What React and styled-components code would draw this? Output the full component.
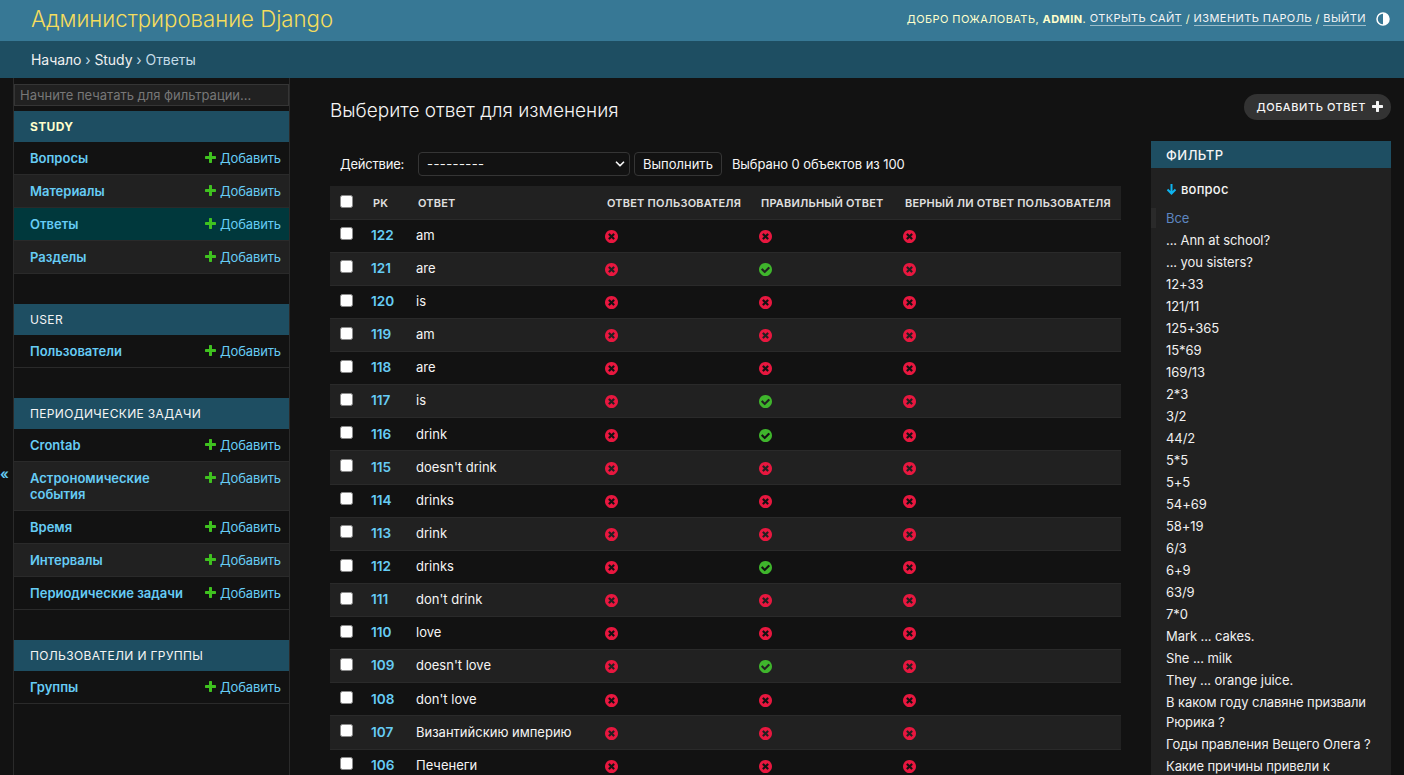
import React from "react";
import styled, { createGlobalStyle } from "styled-components";
import { ChevronDown } from "lucide-react";

const GlobalStyle = createGlobalStyle`
  html, body {
    margin: 0;
    padding: 0;
    height: 100%;
    overflow: hidden;
    background: #121212;
    color: #f5f5f5;
    font-family: Inter, "Noto Sans", sans-serif;
    font-size: 13px;
  }
  * {
    box-sizing: border-box;
  }
`;

const Page = styled.div`
  display: flex;
  flex-direction: column;
  height: 100vh;
  overflow: hidden;
`;

const Header = styled.header`
  display: flex;
  justify-content: space-between;
  align-items: center;
  height: 41px;
  flex: none;
  padding: 0 14px 4px 31px;
  background: #377895;
`;

const Brand = styled.h1`
  margin: 0;
  font-size: 22.2px;
  line-height: 30px;
  font-weight: 300;
  color: #f5dd5d;
`;

const UserTools = styled.div`
  display: flex;
  align-items: center;
  font-size: 11px;
  letter-spacing: 0.42px;
  text-transform: uppercase;
  color: #ffffcc;
  white-space: pre;
`;

const ToolLink = styled.a`
  color: #f5f5f5;
  border-bottom: 1px solid rgba(255, 255, 255, 0.5);
  line-height: 13px;
`;

const ThemeIcon = styled.svg`
  width: 14px;
  height: 14px;
  margin-left: 10px;
`;

const Breadcrumbs = styled.nav`
  display: flex;
  align-items: center;
  height: 37px;
  flex: none;
  padding-left: 31px;
  background: #1e4e62;
  font-size: 14px;
  letter-spacing: -0.06px;
  color: #c4dce8;
  white-space: pre;
`;

const Crumb = styled.a`
  color: #f0f0f0;
`;

const Main = styled.div`
  display: flex;
  flex: 1;
  min-height: 0;
`;

const ToggleColumn = styled.div`
  flex: none;
  width: 14px;
  padding-top: 386px;
  border-right: 1px solid #2a2a2a;
  color: #66ccf5;
  font-size: 14px;
  font-weight: 600;
  line-height: 20px;
`;

const Sidebar = styled.aside`
  flex: none;
  width: 276px;
  padding-top: 6px;
  border-right: 1px solid #2a2a2a;
`;

const FilterInput = styled.input`
  display: block;
  width: 100%;
  height: 22px;
  margin-bottom: 5px;
  padding: 0 5px;
  background: #212121;
  border: 1px solid #353535;
  color: #f5f5f5;
  font: 13px Inter, "Noto Sans", sans-serif;
  &::placeholder {
    color: #777;
    opacity: 1;
  }
`;

const AppSection = styled.section`
  margin-bottom: 30px;
`;

const AppTitle = styled.div`
  display: flex;
  align-items: center;
  height: 31px;
  padding-left: 16px;
  background: #1e4e62;
  font-size: 12px;
  letter-spacing: 0.35px;
  text-transform: uppercase;
  font-weight: ${(p) => (p.$current ? 700 : 400)};
  color: ${(p) => (p.$current ? "#ffffcc" : "#f5f5f5")};
`;

const rowBackground = (p) =>
  p.$current ? "#00383c" : p.$even ? "#212121" : "#121212";

const ModelRow = styled.div`
  display: flex;
  justify-content: space-between;
  align-items: flex-start;
  padding: 8px 8px 8px 16px;
  line-height: 16px;
  border-bottom: 1px solid #2a2a2a;
  background: ${rowBackground};
`;

const ModelName = styled.a`
  max-width: 160px;
  font-weight: 600;
  color: #66ccf5;
`;

const AddLink = styled.a`
  display: flex;
  align-items: center;
  gap: 4px;
  flex: none;
  letter-spacing: -0.12px;
  color: #66ccf5;
`;

const PlusIcon = styled.svg`
  width: 11px;
  height: 11px;
  margin-top: -2px;
  fill: ${(p) => p.$color || "#3fc21f"};
`;

const Content = styled.main`
  flex: 1;
  min-width: 0;
  padding: 16px 13px 0 40px;
`;

const TitleRow = styled.div`
  display: flex;
  justify-content: space-between;
  align-items: center;
  height: 26px;
`;

const Title = styled.h2`
  margin: 6px 0 0;
  font-size: 19px;
  font-weight: 300;
  color: #f5f5f5;
`;

const AddButton = styled.a`
  display: flex;
  align-items: center;
  gap: 6px;
  height: 26px;
  padding: 0 8px 0 12px;
  border-radius: 13px;
  background: #333;
  font-size: 11px;
  font-weight: 500;
  letter-spacing: 0.56px;
  text-transform: uppercase;
  color: #f5f5f5;
`;

const Changelist = styled.div`
  display: flex;
  gap: 30px;
  align-items: flex-start;
  margin-top: 21px;
`;

const Results = styled.div`
  flex: none;
  width: 791px;
  padding-top: 11px;
`;

const Actions = styled.div`
  display: flex;
  align-items: center;
  height: 24px;
  margin-bottom: 10px;
  padding-left: 10px;
`;

const ActionLabel = styled.label`
  width: 78px;
  flex: none;
  letter-spacing: -0.2px;
`;

const SelectWrap = styled.div`
  position: relative;
  width: 212px;
  height: 24px;
`;

const ActionSelect = styled.select`
  width: 100%;
  height: 100%;
  padding: 0 8px;
  appearance: none;
  background: #121212;
  border: 1px solid #353535;
  border-radius: 4px;
  color: #f5f5f5;
  letter-spacing: 0.4px;
  font: 13px Inter, "Noto Sans", sans-serif;
`;

const SelectChevron = styled(ChevronDown)`
  position: absolute;
  right: 3px;
  top: 5px;
  pointer-events: none;
  color: #f5f5f5;
`;

const RunButton = styled.button`
  height: 24px;
  margin-left: 4px;
  padding: 0 8px;
  background: #121212;
  border: 1px solid #353535;
  border-radius: 4px;
  color: #f5f5f5;
  font: 13px Inter, "Noto Sans", sans-serif;
`;

const Counter = styled.span`
  margin-left: 10px;
  letter-spacing: -0.08px;
`;

const Table = styled.table`
  width: 791px;
  border-collapse: collapse;
  table-layout: fixed;
`;

const HeadCell = styled.th`
  height: 33px;
  padding: 1px 10px 0;
  background: #212121;
  border-bottom: 1px solid #2a2a2a;
  font-size: 11px;
  font-weight: 600;
  letter-spacing: 0.2px;
  text-align: left;
  text-transform: uppercase;
  white-space: nowrap;
  color: #e0e0e0;
`;

const HeadCheckCell = styled(HeadCell)`
  padding: 0 0 2px 10px;
`;

const BodyRow = styled.tr`
  background: ${(p) => (p.$even ? "#212121" : "#121212")};
`;

const Cell = styled.td`
  height: 33.125px;
  padding: 0 8px 1.6px;
  border-bottom: 1px solid #2a2a2a;
`;

const CheckCell = styled(Cell)`
  padding: 0 0 3.6px 10px;
`;

const PkCell = styled(Cell)`
  font-weight: 600;
  color: #66ccf5;
  font-size: 13.6px;
`;

const Checkbox = styled.input`
  display: block;
  width: 13px;
  height: 13px;
  margin: 0;
  appearance: none;
  background: #fff;
  border: 1px solid #8a8a8a;
  border-radius: 2.5px;
`;

const BoolIcon = styled.svg`
  display: block;
  width: 13px;
  height: 13px;
  margin-top: 3px;
  fill: ${(p) => (p.$yes ? "#3fb52c" : "#e8173f")};
`;

const FilterPanel = styled.aside`
  flex: none;
  width: 240px;
  height: 800px;
  background: #212121;
`;

const FilterTitle = styled.div`
  display: flex;
  align-items: center;
  height: 27px;
  padding-left: 15px;
  background: #1e4e62;
  font-size: 13px;
  font-weight: 500;
  letter-spacing: 0.5px;
  text-transform: uppercase;
`;

const FilterHeading = styled.div`
  display: flex;
  align-items: center;
  gap: 4px;
  height: 20px;
  margin: 11px 0 9px 15px;
  font-size: 13px;
  font-weight: 500;
  letter-spacing: 0.2px;
`;

const ArrowIcon = styled.svg`
  width: 11px;
  height: 12px;
`;

const FilterList = styled.ul`
  margin: 0;
  padding: 0 15px;
  list-style: none;
  letter-spacing: -0.08px;
`;

const FilterItem = styled.li`
  margin-top: 2px;
  line-height: 20px;
  color: ${(p) => (p.$selected ? "#5d86c0" : "#f0f0f0")};
  ${(p) =>
    p.$selected &&
    `
    margin-left: -15px;
    padding-left: 10px;
    border-left: 5px solid #2a2a2a;
  `}
`;

const Plus = ({ color }) => (
  <PlusIcon $color={color} viewBox="192 192 1408 1408">
    <path d="M1600 796v192q0 40-28 68t-68 28h-416v416q0 40-28 68t-68 28h-192q-40 0-68-28t-28-68v-416h-416q-40 0-68-28t-28-68v-192q0-40 28-68t68-28h416v-416q0-40 28-68t68-28h192q40 0 68 28t28 68v416h416q40 0 68 28t28 68z" />
  </PlusIcon>
);

const Bool = ({ yes }) => (
  <BoolIcon $yes={yes} viewBox="128 128 1536 1536">
    {yes ? (
      <path d="M1412 734q0-28-18-46l-91-90q-19-19-45-19t-45 19l-408 407-226-226q-19-19-45-19t-45 19l-91 90q-18 18-18 46 0 27 18 45l362 362q19 19 45 19 27 0 46-19l543-543q18-18 18-45zm252 162q0 209-103 385.5t-279.5 279.5-385.5 103-385.5-103-279.5-279.5-103-385.5 103-385.5 279.5-279.5 385.5-103 385.5 103 279.5 279.5 103 385.5z" />
    ) : (
      <path d="M1277 1122q0-26-19-45l-181-181 181-181q19-19 19-45 0-27-19-46l-90-90q-19-19-46-19-26 0-45 19l-181 181-181-181q-19-19-45-19-27 0-46 19l-90 90q-19 19-19 46 0 26 19 45l181 181-181 181q-19 19-19 45 0 27 19 46l90 90q19 19 46 19 26 0 45-19l181-181 181 181q19 19 45 19 27 0 46-19l90-90q19-19 19-46zm387-226q0 209-103 385.5t-279.5 279.5-385.5 103-385.5-103-279.5-279.5-103-385.5 103-385.5 279.5-279.5 385.5-103 385.5 103 279.5 279.5 103 385.5z" />
    )}
  </BoolIcon>
);

const APPS = [
  { title: "Study", current: true, models: ["Вопросы", "Материалы", "Ответы", "Разделы"], active: "Ответы" },
  { title: "User", models: ["Пользователи"] },
  {
    title: "Периодические задачи",
    models: ["Crontab", "Астрономические события", "Время", "Интервалы", "Периодические задачи"],
  },
  { title: "Пользователи и группы", models: ["Группы"] },
];

const ANSWERS = [
  [122, "am", false],
  [121, "are", true],
  [120, "is", false],
  [119, "am", false],
  [118, "are", false],
  [117, "is", true],
  [116, "drink", true],
  [115, "doesn't drink", false],
  [114, "drinks", false],
  [113, "drink", false],
  [112, "drinks", true],
  [111, "don't drink", false],
  [110, "love", false],
  [109, "doesn't love", true],
  [108, "don't love", false],
  [107, "Византийскию империю", false],
  [106, "Печенеги", false],
];

const FILTERS = [
  "... Ann at school?",
  "... you sisters?",
  "12+33",
  "121/11",
  "125+365",
  "15*69",
  "169/13",
  "2*3",
  "3/2",
  "44/2",
  "5*5",
  "5+5",
  "54+69",
  "58+19",
  "6/3",
  "6+9",
  "63/9",
  "7*0",
  "Mark ... cakes.",
  "She ... milk",
  "They ... orange juice.",
  "В каком году славяне призвали Рюрика ?",
  "Годы правления Вещего Олега ?",
  "Какие причины привели к",
];

const COLUMNS = [
  ["", 33],
  ["pk", 45],
  ["Ответ", 189],
  ["Ответ пользователя", 154],
  ["Правильный ответ", 144],
  ["Верный ли ответ пользователя", 226],
];

const App = () => {
  return (
    <Page>
      <GlobalStyle />
      <Header>
        <Brand>Администрирование Django</Brand>
        <UserTools>
          Добро пожаловать, <b>admin</b>. <ToolLink>Открыть сайт</ToolLink> /{" "}
          <ToolLink>Изменить пароль</ToolLink> / <ToolLink>Выйти</ToolLink>
          <ThemeIcon viewBox="0 0 14 14">
            <circle cx="7" cy="7" r="6" fill="none" stroke="#fff" strokeWidth="1.5" />
            <path d="M7 1a6 6 0 0 1 0 12z" fill="#fff" />
          </ThemeIcon>
        </UserTools>
      </Header>
      <Breadcrumbs>
        <Crumb>Начало</Crumb> › <Crumb>Study</Crumb> › Ответы
      </Breadcrumbs>
      <Main>
        <ToggleColumn>«</ToggleColumn>
        <Sidebar>
          <FilterInput placeholder="Начните печатать для фильтрации..." />
          {APPS.map((app) => (
            <AppSection key={app.title}>
              <AppTitle $current={app.current}>{app.title}</AppTitle>
              {app.models.map((model, index) => (
                <ModelRow key={model} $even={index % 2 === 1} $current={model === app.active}>
                  <ModelName>{model}</ModelName>
                  <AddLink>
                    <Plus />
                    Добавить
                  </AddLink>
                </ModelRow>
              ))}
            </AppSection>
          ))}
        </Sidebar>
        <Content>
          <TitleRow>
            <Title>Выберите ответ для изменения</Title>
            <AddButton>
              Добавить ответ
              <Plus color="#f5f5f5" />
            </AddButton>
          </TitleRow>
          <Changelist>
            <Results>
              <Actions>
                <ActionLabel>Действие:</ActionLabel>
                <SelectWrap>
                  <ActionSelect>
                    <option>---------</option>
                  </ActionSelect>
                  <SelectChevron size={14} strokeWidth={3} />
                </SelectWrap>
                <RunButton>Выполнить</RunButton>
                <Counter>Выбрано 0 объектов из 100</Counter>
              </Actions>
              <Table>
                <colgroup>
                  {COLUMNS.map(([name, width]) => (
                    <col key={name} width={width} />
                  ))}
                </colgroup>
                <thead>
                  <tr>
                    <HeadCheckCell>
                      <Checkbox type="checkbox" />
                    </HeadCheckCell>
                    {COLUMNS.slice(1).map(([name]) => (
                      <HeadCell key={name}>{name}</HeadCell>
                    ))}
                  </tr>
                </thead>
                <tbody>
                  {ANSWERS.map(([pk, text, correct], index) => (
                    <BodyRow key={pk} $even={index % 2 === 1}>
                      <CheckCell>
                        <Checkbox type="checkbox" />
                      </CheckCell>
                      <PkCell>{pk}</PkCell>
                      <Cell>{text}</Cell>
                      <Cell>
                        <Bool yes={false} />
                      </Cell>
                      <Cell>
                        <Bool yes={correct} />
                      </Cell>
                      <Cell>
                        <Bool yes={false} />
                      </Cell>
                    </BodyRow>
                  ))}
                </tbody>
              </Table>
            </Results>
            <FilterPanel>
              <FilterTitle>Фильтр</FilterTitle>
              <FilterHeading>
                <ArrowIcon viewBox="0 0 11 12">
                  <path
                    d="M5.5 1v9M1.5 6.5l4 4 4-4"
                    fill="none"
                    stroke="#0db4f0"
                    strokeWidth="2"
                  />
                </ArrowIcon>
                вопрос
              </FilterHeading>
              <FilterList>
                <FilterItem $selected>Все</FilterItem>
                {FILTERS.map((item) => (
                  <FilterItem key={item}>{item}</FilterItem>
                ))}
              </FilterList>
            </FilterPanel>
          </Changelist>
        </Content>
      </Main>
    </Page>
  );
};

export default App;
